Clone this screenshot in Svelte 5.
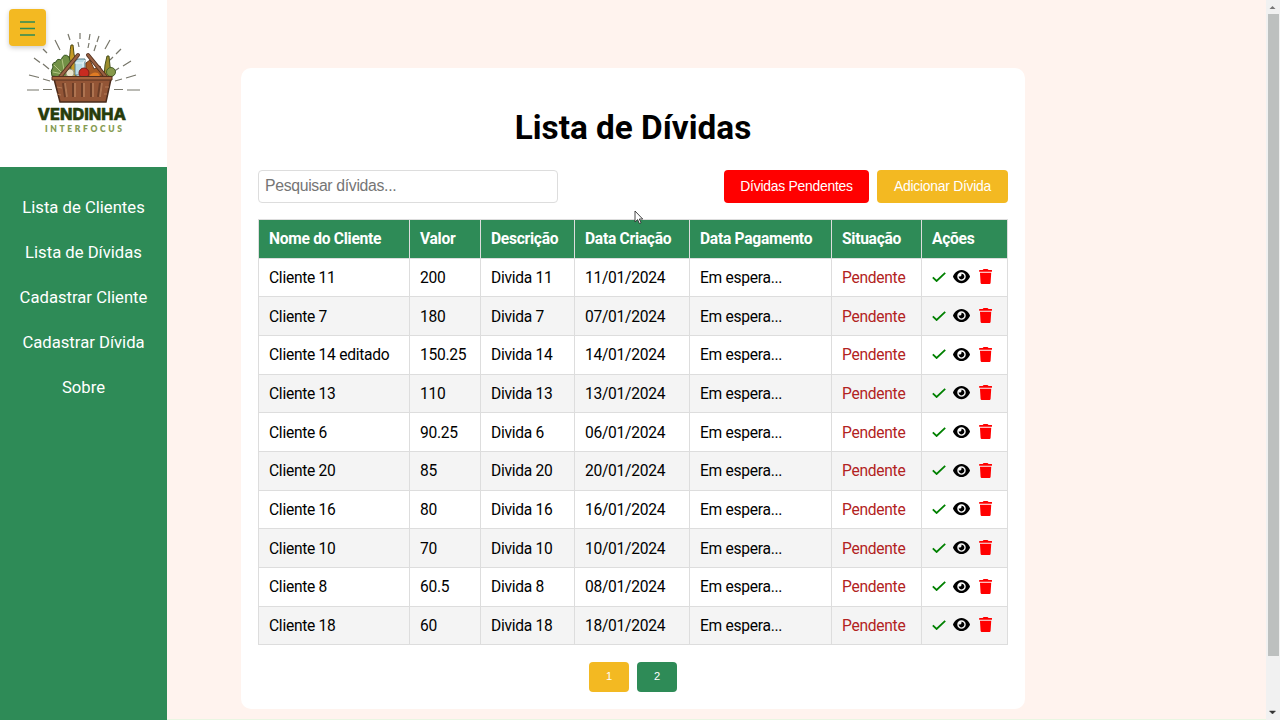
<script>
  const links = ['Lista de Clientes', 'Lista de Dívidas', 'Cadastrar Cliente', 'Cadastrar Dívida', 'Sobre'];
  const columns = ['Nome do Cliente', 'Valor', 'Descrição', 'Data Criação', 'Data Pagamento', 'Situação', 'Ações'];
  const debts = [
    ['Cliente 11', '200', 'Divida 11', '11/01/2024'],
    ['Cliente 7', '180', 'Divida 7', '07/01/2024'],
    ['Cliente 14 editado', '150.25', 'Divida 14', '14/01/2024'],
    ['Cliente 13', '110', 'Divida 13', '13/01/2024'],
    ['Cliente 6', '90.25', 'Divida 6', '06/01/2024'],
    ['Cliente 20', '85', 'Divida 20', '20/01/2024'],
    ['Cliente 16', '80', 'Divida 16', '16/01/2024'],
    ['Cliente 10', '70', 'Divida 10', '10/01/2024'],
    ['Cliente 8', '60.5', 'Divida 8', '08/01/2024'],
    ['Cliente 18', '60', 'Divida 18', '18/01/2024']
  ];
</script>

<div class="app">
  <aside>
    <div class="brand">
      <svg class="logo" width="167" height="167" viewBox="0 0 167 167">
        <path d="M27 90h12M43 89.500h9M29 75l10 2.500M43 79l7 2M34 58l6 4.500M43 64l6 5M43 49l4 4M55 40l5 10M68 34l2 6M78 42l1 5M80 33v6M90 34l-1 6M89 43l-1 5M99 36l-2 6M96 45l-2 6M110 40l-5 9M121 49l-5 5M113 57l-3 3M131 61l-8 5M119 68l-6 4M136 75l-10 3M122 79l-7 2M140 90h-13M123 89.500h-9" fill="none" stroke="#77766a" stroke-width="1.2" />
        <path d="M69 62l1-9q0-3 1-8h2l1 9 2 9v15h-8z" fill="#c59a24" stroke="#4d4b16" />
        <path d="M52 76q-2-5 1-9-2-4 3-5 1-4 5-2 3-8 8-3l2 7-1 14z" fill="#729146" stroke="#365522" />
        <path d="M54 65l7 7M62 59l2 11M53 72l10 2" stroke="#b4c684" />
        <path d="M104 77l1-12 2-9h2l1 10 2 11z" fill="#9c8d2d" stroke="#48501a" />
        <circle cx="111" cy="72" r="4.500" fill="#87994b" stroke="#49612b" />
        <path d="M75 61l3-2h7v16H75z" fill="#b9dce5" stroke="#587d86" />
        <path d="M75 63h8l2-3M83 63v12" stroke="#edf9fa" fill="none" />
        <path d="M86 63l4-3 4 9 6-3 3 10H86z" fill="#a65a24" stroke="#633b1c" />
        <circle cx="70" cy="73" r="4" fill="#e8e3ca" stroke="#a19d80" />
        <circle cx="84" cy="73" r="5" fill="#c92b20" stroke="#791f18" />
        <path d="M89 76q4-5 9-3l2 3z" fill="#df7b24" />
        <path d="M60 77l18-22M88 55l18 22" stroke="#55311f" stroke-width="4" stroke-linecap="round" />
        <path d="M60 77l18-22M88 55l18 22" stroke="#986042" stroke-width="2.2" stroke-linecap="round" />
        <path d="M54 79h57l-5 23H60z" fill="#935536" stroke="#4a2b1b" stroke-width="1.5" />
        <path d="M52 76.500h60v3.500H52z" fill="#a7653e" stroke="#54301e" />
        <path d="M64 83l2 14M74 83v14M83 83v14M92 83v14M101 83l-2 14" stroke="#6b3d27" stroke-width="4" />
        <path d="M65 83l2 14M75 83v14M84 83v14M93 83v14M102 83l-2 14" stroke="#ae7451" stroke-width="2" />
        <path d="M57 87l5 1M57 94l4 1M105 87h4M104 94h3" stroke="#b27b57" />
        <text x="37.500" y="119.500" textLength="88.500" lengthAdjust="spacingAndGlyphs" class="name">VENDINHA</text>
        <text x="45" y="131.500" textLength="77" class="sub">INTERFOCUS</text>
      </svg>
    </div>
    <nav>
      {#each links as link}<a href="#top">{link}</a>{/each}
    </nav>
    <button class="menu" aria-label="Menu">
      <svg width="16" height="17" viewBox="0 0 16 17"><path d="M0 3h15M0 9.500h15M0 16h15" stroke="#2e8b57" stroke-width="1.700" /></svg>
    </button>
  </aside>

  <main>
    <section class="card">
      <h1>Lista de Dívidas</h1>
      <div class="tools">
        <input type="text" placeholder="Pesquisar dívidas..." />
        <button class="pending">Dívidas Pendentes</button>
        <button class="add">Adicionar Dívida</button>
      </div>
      <table>
        <colgroup>
          <col class="c1" /><col class="c2" /><col class="c3" /><col class="c4" /><col class="c5" /><col class="c6" /><col class="c7" />
        </colgroup>
        <thead>
          <tr>{#each columns as column}<th>{column}</th>{/each}</tr>
        </thead>
        <tbody>
          {#each debts as debt}
            <tr>
              {#each debt as value}<td>{value}</td>{/each}
              <td>Em espera...</td>
              <td class="status">Pendente</td>
              <td>
                <div class="actions">
                  <svg class="check" viewBox="0 0 14 10"><path d="M.8 5.300L4.600 9 13.200.8" fill="none" stroke="#008000" stroke-width="1.800" /></svg>
                  <svg class="eye" viewBox="0 32 576 448"><path d="M288 32c-80.8 0-145.5 36.8-192.6 80.6C48.6 156 17.3 208 2.5 243.7c-3.3 7.9-3.3 16.7 0 24.6C17.3 304 48.6 356 95.4 399.4C142.5 443.2 207.2 480 288 480s145.500-36.8 192.6-80.6c46.8-43.5 78.1-95.4 93-131.1c3.3-7.9 3.3-16.7 0-24.6c-14.9-35.7-46.2-87.7-93-131.1C433.5 68.8 368.8 32 288 32zM144 256a144 144 0 1 1 288 0 144 144 0 1 1 -288 0zm144-64c0 35.3-28.7 64-64 64c-7.1 0-13.9-1.2-20.3-3.3c-5.5-1.8-11.9 1.6-11.7 7.4c.3 6.9 1.3 13.8 3.2 20.7c13.7 51.2 66.4 81.6 117.6 67.9s81.6-66.4 67.9-117.6c-11.1-41.5-47.8-69.4-88.6-71.1c-5.8-.2-9.2 6.1-7.4 11.7c2.1 6.4 3.3 13.2 3.3 20.3z" /></svg>
                  <svg class="trash" viewBox="0 0 448 512"><path d="M135.2 17.7L128 32H32C14.3 32 0 46.3 0 64S14.3 96 32 96H416c17.7 0 32-14.3 32-32s-14.3-32-32-32H320l-7.2-14.3C307.4 6.8 296.3 0 284.2 0H163.8c-12.1 0-23.2 6.8-28.6 17.7zM416 128H32L53.2 467c1.6 25.3 22.6 45 47.9 45H346.9c25.3 0 46.3-19.7 47.9-45L416 128z" fill="red" /></svg>
                </div>
              </td>
            </tr>
          {/each}
        </tbody>
      </table>
      <div class="pages"><button class="current">1</button><button>2</button></div>
    </section>
  </main>

  <div class="scroll">
    <svg width="13" height="14" viewBox="0 0 13 14"><path d="M3.500 9l3-3 3 3z" fill="#777" /></svg>
    <div class="thumb"></div>
    <svg width="13" height="14" viewBox="0 0 13 14"><path d="M3.500 5l3 3 3-3z" fill="#333" stroke="#333" stroke-width=".5" /></svg>
  </div>

  <svg class="cursor" width="10" height="15" viewBox="0 0 10 15"><path d="M1 1v11l2.6-2.4 1.8 4 1.7-.8-1.8-3.8H8.700z" fill="#fff" stroke="#333" stroke-width=".9" /></svg>
</div>

<style>
  :global(body) { overflow: hidden; }
  * { box-sizing: border-box; }
  .app { position: relative; display: flex; width: 1280px; height: 720px; overflow: hidden; background: #fff3ee; font-family: Roboto, sans-serif; color: #000; }
  aside { position: relative; width: 167px; flex: none; background: #2e8b57; }
  .brand { height: 166.500px; background: #fff; }
  .logo { display: block; }
  .name { font: 800 16.5px Inter, Lato, sans-serif; fill: #263c0b; stroke: #263c0b; stroke-width: .5px; stroke-linejoin: round; }
  .sub { font: 800 8.5px Lato, sans-serif; fill: #879c54; }
  nav { display: flex; flex-direction: column; align-items: center; padding-top: 31px; gap: 25px; }
  nav a { color: #fff; text-decoration: none; font-size: 16.67px; line-height: 20px; }
  button { border: 0; padding: 0; color: #fff; font-family: "Liberation Sans", Arial, sans-serif; }
  .menu { position: absolute; left: 9px; top: 9px; width: 37px; height: 37px; display: flex; align-items: center; justify-content: center; border-radius: 4px; background: #f3b922; box-shadow: 0 2px 5px #0003; }
  main { flex: 1; padding: 68px 0 0 74px; border-bottom: 1px solid #e9f6e2; }
  .card { width: 784px; height: 641px; padding: 40px 17px 0; border-radius: 10px; background: #fff; }
  h1 { margin: 0; height: 62px; font-size: 33.33px; line-height: 40px; text-align: center; font-weight: 700; }
  .tools { display: flex; align-items: flex-start; gap: 8px; height: 33px; margin-bottom: 16px; }
  input { width: 300px; height: 33px; margin: 0 auto 0 0; padding: 0 6px 2px; border: 1px solid #ddd; border-radius: 4px; font: 15.8px "Liberation Sans", Arial, sans-serif; letter-spacing: -.33px; background: #fff; }
  input::placeholder { color: #757575; }
  .tools button { height: 32.5px; padding-bottom: 1px; border-radius: 4px; font-size: 13.9px; letter-spacing: -.25px; }
  .pending { width: 145px; background: red; }
  .add { width: 131px; background: #f3b922; }
  table { width: 749px; table-layout: fixed; border-collapse: collapse; font-size: 15.6px; letter-spacing: -.28px; }
  .c1 { width: 151px; } .c2 { width: 71px; } .c3 { width: 94px; } .c4 { width: 115px; } .c5 { width: 142px; } .c6 { width: 90px; } .c7 { width: 86px; }
  th, td { height: 38.67px; padding: 2px 10px 0; border: 1px solid #ddd; text-align: left; white-space: nowrap; line-height: 19px; }
  th { background: #2e8b57; color: #fff; font-weight: 700; }
  tbody tr:nth-child(even) { background: #f4f4f4; }
  .status { color: #b22222; }
  .actions { display: flex; align-items: center; padding-bottom: 3px; }
  .check { width: 14px; height: 10px; margin-left: -.5px; }
  .eye { width: 17px; height: 13.200px; margin: 0 8.500px 0 7.500px; }
  .trash { width: 13.200px; height: 15px; }
  .pages { display: flex; justify-content: center; gap: 8px; margin-top: 17px; }
  .pages button { width: 40px; height: 30px; padding-bottom: 2px; border-radius: 4px; background: #2e8b57; font-size: 11.1px; }
  .pages .current { background: #f3b922; }
  .scroll { width: 14px; display: flex; flex-direction: column; background: #f1f1f1; }
  .scroll svg { flex: none; }
  .thumb { width: 11px; height: 642px; margin: 0 auto auto; background: #bdc0bf; }
  .cursor { position: absolute; left: 634px; top: 210px; }
</style>
